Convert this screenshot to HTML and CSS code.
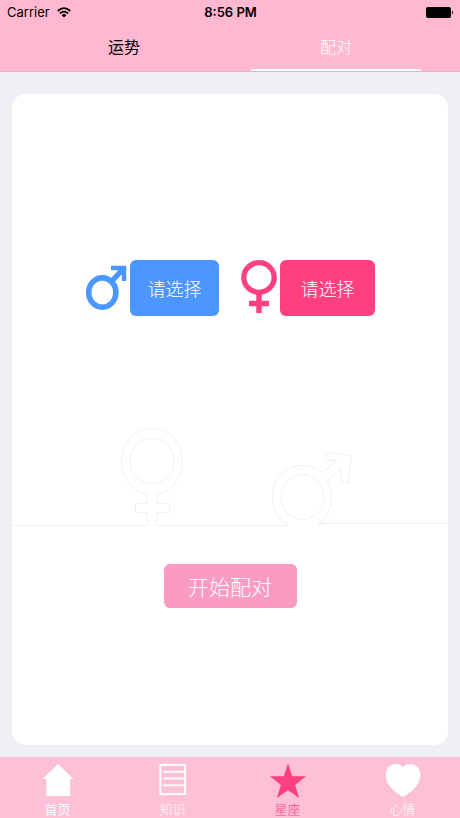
FILE: index.html
```html
<!DOCTYPE html>
<html lang="zh-CN">
<head>
    <meta charset="UTF-8">
    <meta name="viewport" content="width=device-width, initial-scale=1.0">
    <title>配对</title>
    <link rel="stylesheet" href="styles.css">
</head>
<body>

    <!-- Header -->
    <header class="header">
        <div class="status">
            <div class="carrier">
                <span>Carrier</span>
                <svg width="14" height="11" viewBox="0 0 14 11" fill="none" stroke="#000" stroke-width="1.7">
                    <path d="M0.7 4 Q7 -1.8 13.3 4"/>
                    <path d="M2.8 6.4 Q7 2.8 11.2 6.4"/>
                    <path d="M4.6 7.9 Q7 6 9.4 7.9 L7 10.4 Z" fill="#000" stroke="none"/>
                </svg>
            </div>
            <span class="time">8:56 PM</span>
            <div class="battery">
                <svg width="28" height="11" viewBox="0 0 28 11">
                    <rect x="0" y="0" width="25" height="11" rx="2"/>
                    <path d="M26 3.5 Q28 5.5 26 7.5 Z"/>
                </svg>
            </div>
        </div>
        <nav class="tabs">
            <a href="#fortune">运势</a>
            <a href="#match" class="active">配对</a>
        </nav>
    </header>

    <!-- Match card -->
    <main class="content">
        <section class="card">
            <div class="pickers">
                <div class="picker">
                    <svg width="42" height="56" viewBox="0 0 42 56" fill="none" stroke="#4c97ff">
                        <ellipse cx="17.3" cy="32.5" rx="13.6" ry="14.6" stroke-width="5.6"/>
                        <path d="M26.5 21.5 L38 9" stroke-width="5.5"/>
                        <path d="M26 8 H39 V21" stroke-width="4.5"/>
                    </svg>
                    <button class="male">请选择</button>
                </div>
                <div class="picker">
                    <svg width="36" height="56" viewBox="0 0 36 56" fill="none" stroke="#ff407f">
                        <ellipse cx="18" cy="17.5" rx="15.2" ry="14.8" stroke-width="5.3"/>
                        <path d="M18 34 V53 M8 43.5 H28" stroke-width="5.5"/>
                    </svg>
                    <button class="female">请选择</button>
                </div>
            </div>

            <svg class="skyline" viewBox="0 0 436 100" fill="none" stroke="#f0f0f0">
                <path d="M0 98.5 H135.5 V85.5 H123.5 V76.5 H135.5 V67 A30.5 33 0 1 1 144.5 67 V76.5 H157.5 V85.5 H144.5 V98.5 H276 C266 92 260.5 82 260.5 70 C260.5 51 274 38.5 290 38.5 C298 38.5 304 41 310 45.5 L325 34 L313.5 33 V25.5 L339.5 28.5 L336 56.5 L328.5 55 L329.5 42 L315 54 C318 59 319.5 64 319.5 70 C319.5 82 314.5 92 306 96.5 H436"/>
                <ellipse cx="140" cy="34" rx="22" ry="23"/>
                <ellipse cx="290.5" cy="70" rx="21.5" ry="22.5"/>
            </svg>

            <button class="start">开始配对</button>
        </section>
    </main>

    <!-- Bottom bar -->
    <nav class="tabbar">
        <a href="#home" class="home">
            <svg width="36" height="36" viewBox="0 0 36 36" fill="#fff">
                <path d="M18 1 L34 16.5 H30.5 V34 H6 V16.5 H2 Z"/>
            </svg>
            <span>首页</span>
        </a>
        <a href="#knowledge">
            <svg width="36" height="36" viewBox="0 0 36 36" fill="none" stroke="#fff" stroke-width="2">
                <rect x="5" y="2" width="25.5" height="30"/>
                <path d="M8 9 H30 M8 16 H30 M8 23 H30"/>
            </svg>
            <span>知识</span>
        </a>
        <a href="#stars" class="active">
            <svg width="38" height="36" viewBox="0 0 38 36" fill="#ff407f">
                <path d="M19 0.5 L23.3 13.5 H37.5 L26.3 22.5 L30.5 36 L19 28 L7.5 36 L11.7 22.5 L0.5 13.5 H14.7 Z"/>
            </svg>
            <span>星座</span>
        </a>
        <a href="#mood">
            <svg width="36" height="36" viewBox="0 0 36 36" fill="#fff">
                <path d="M18 4 C22 -0.5 30 0 33.5 5 C37 10 36 17 33.5 21 C30.5 26 25 31 18 35 C11 31 5.5 26 2.5 21 C0 17 -1 10 2.5 5 C6 0 14 -0.5 18 4 Z"/>
            </svg>
            <span>心情</span>
        </a>
    </nav>

</body>
</html>
```
FILE: styles.css
```css
* {
    box-sizing: border-box;
}

body {
    display: flex;
    flex-direction: column;
    min-height: 100vh;
    margin: 0;
    background-color: #efeff4;
    font-family: Inter, "Noto Sans CJK SC", sans-serif;
}

a {
    text-decoration: none;
}

button {
    border: none;
    padding: 0;
    color: white;
    font-family: inherit;
    font-weight: 300;
    cursor: pointer;
}

.header {
    background-color: #ffb8d2;
    border-bottom: 1px solid #e3b4c6;
}

.status {
    display: grid;
    grid-template-columns: 1fr auto 1fr;
    align-items: center;
    height: 24px;
    padding: 0 6px 0 7px;
    font-size: 13px;
}

.carrier {
    display: flex;
    align-items: center;
    gap: 7px;
}

.time {
    font-weight: 600;
}

.battery {
    display: flex;
    justify-content: flex-end;
}

.tabs {
    display: flex;
    height: 47px;
    padding: 0 18px;
}

.tabs a {
    flex: 1;
    margin: 0 21px;
    color: black;
    font-size: 16px;
    line-height: 46px;
    text-align: center;
}

.tabs .active {
    color: white;
    font-weight: 300;
    border-bottom: 2px solid white;
}

.content {
    display: flex;
    flex: 1;
    padding: 22px 12px 12px;
}

.card {
    display: flex;
    flex: 1;
    flex-direction: column;
    align-items: center;
    padding: 166px 0 24px;
    border-radius: 14px;
    background-color: white;
}

.pickers {
    display: flex;
    gap: 22px;
}

.picker {
    display: flex;
    gap: 3px;
}

.picker button {
    height: 56px;
    border-radius: 6px;
    font-size: 18px;
}

.male {
    width: 89px;
    background-color: #4c97ff;
}

.female {
    width: 95px;
    background-color: #ff407f;
}

.skyline {
    width: 100%;
    margin-top: 111px;
}

.start {
    width: 133px;
    height: 44px;
    margin-top: 37px;
    border-radius: 6px;
    background-color: #fa9bc1;
    font-size: 21px;
}

.tabbar {
    display: flex;
    height: 61px;
    padding-top: 6px;
    background-color: #fdc0d6;
}

.tabbar a {
    display: flex;
    flex: 1;
    flex-direction: column;
    align-items: center;
    gap: 2px;
    color: white;
    font-size: 13px;
    font-weight: 300;
    line-height: 18px;
}

.tabbar .home {
    font-weight: 400;
}

.tabbar .active {
    color: #ff407f;
}
```
